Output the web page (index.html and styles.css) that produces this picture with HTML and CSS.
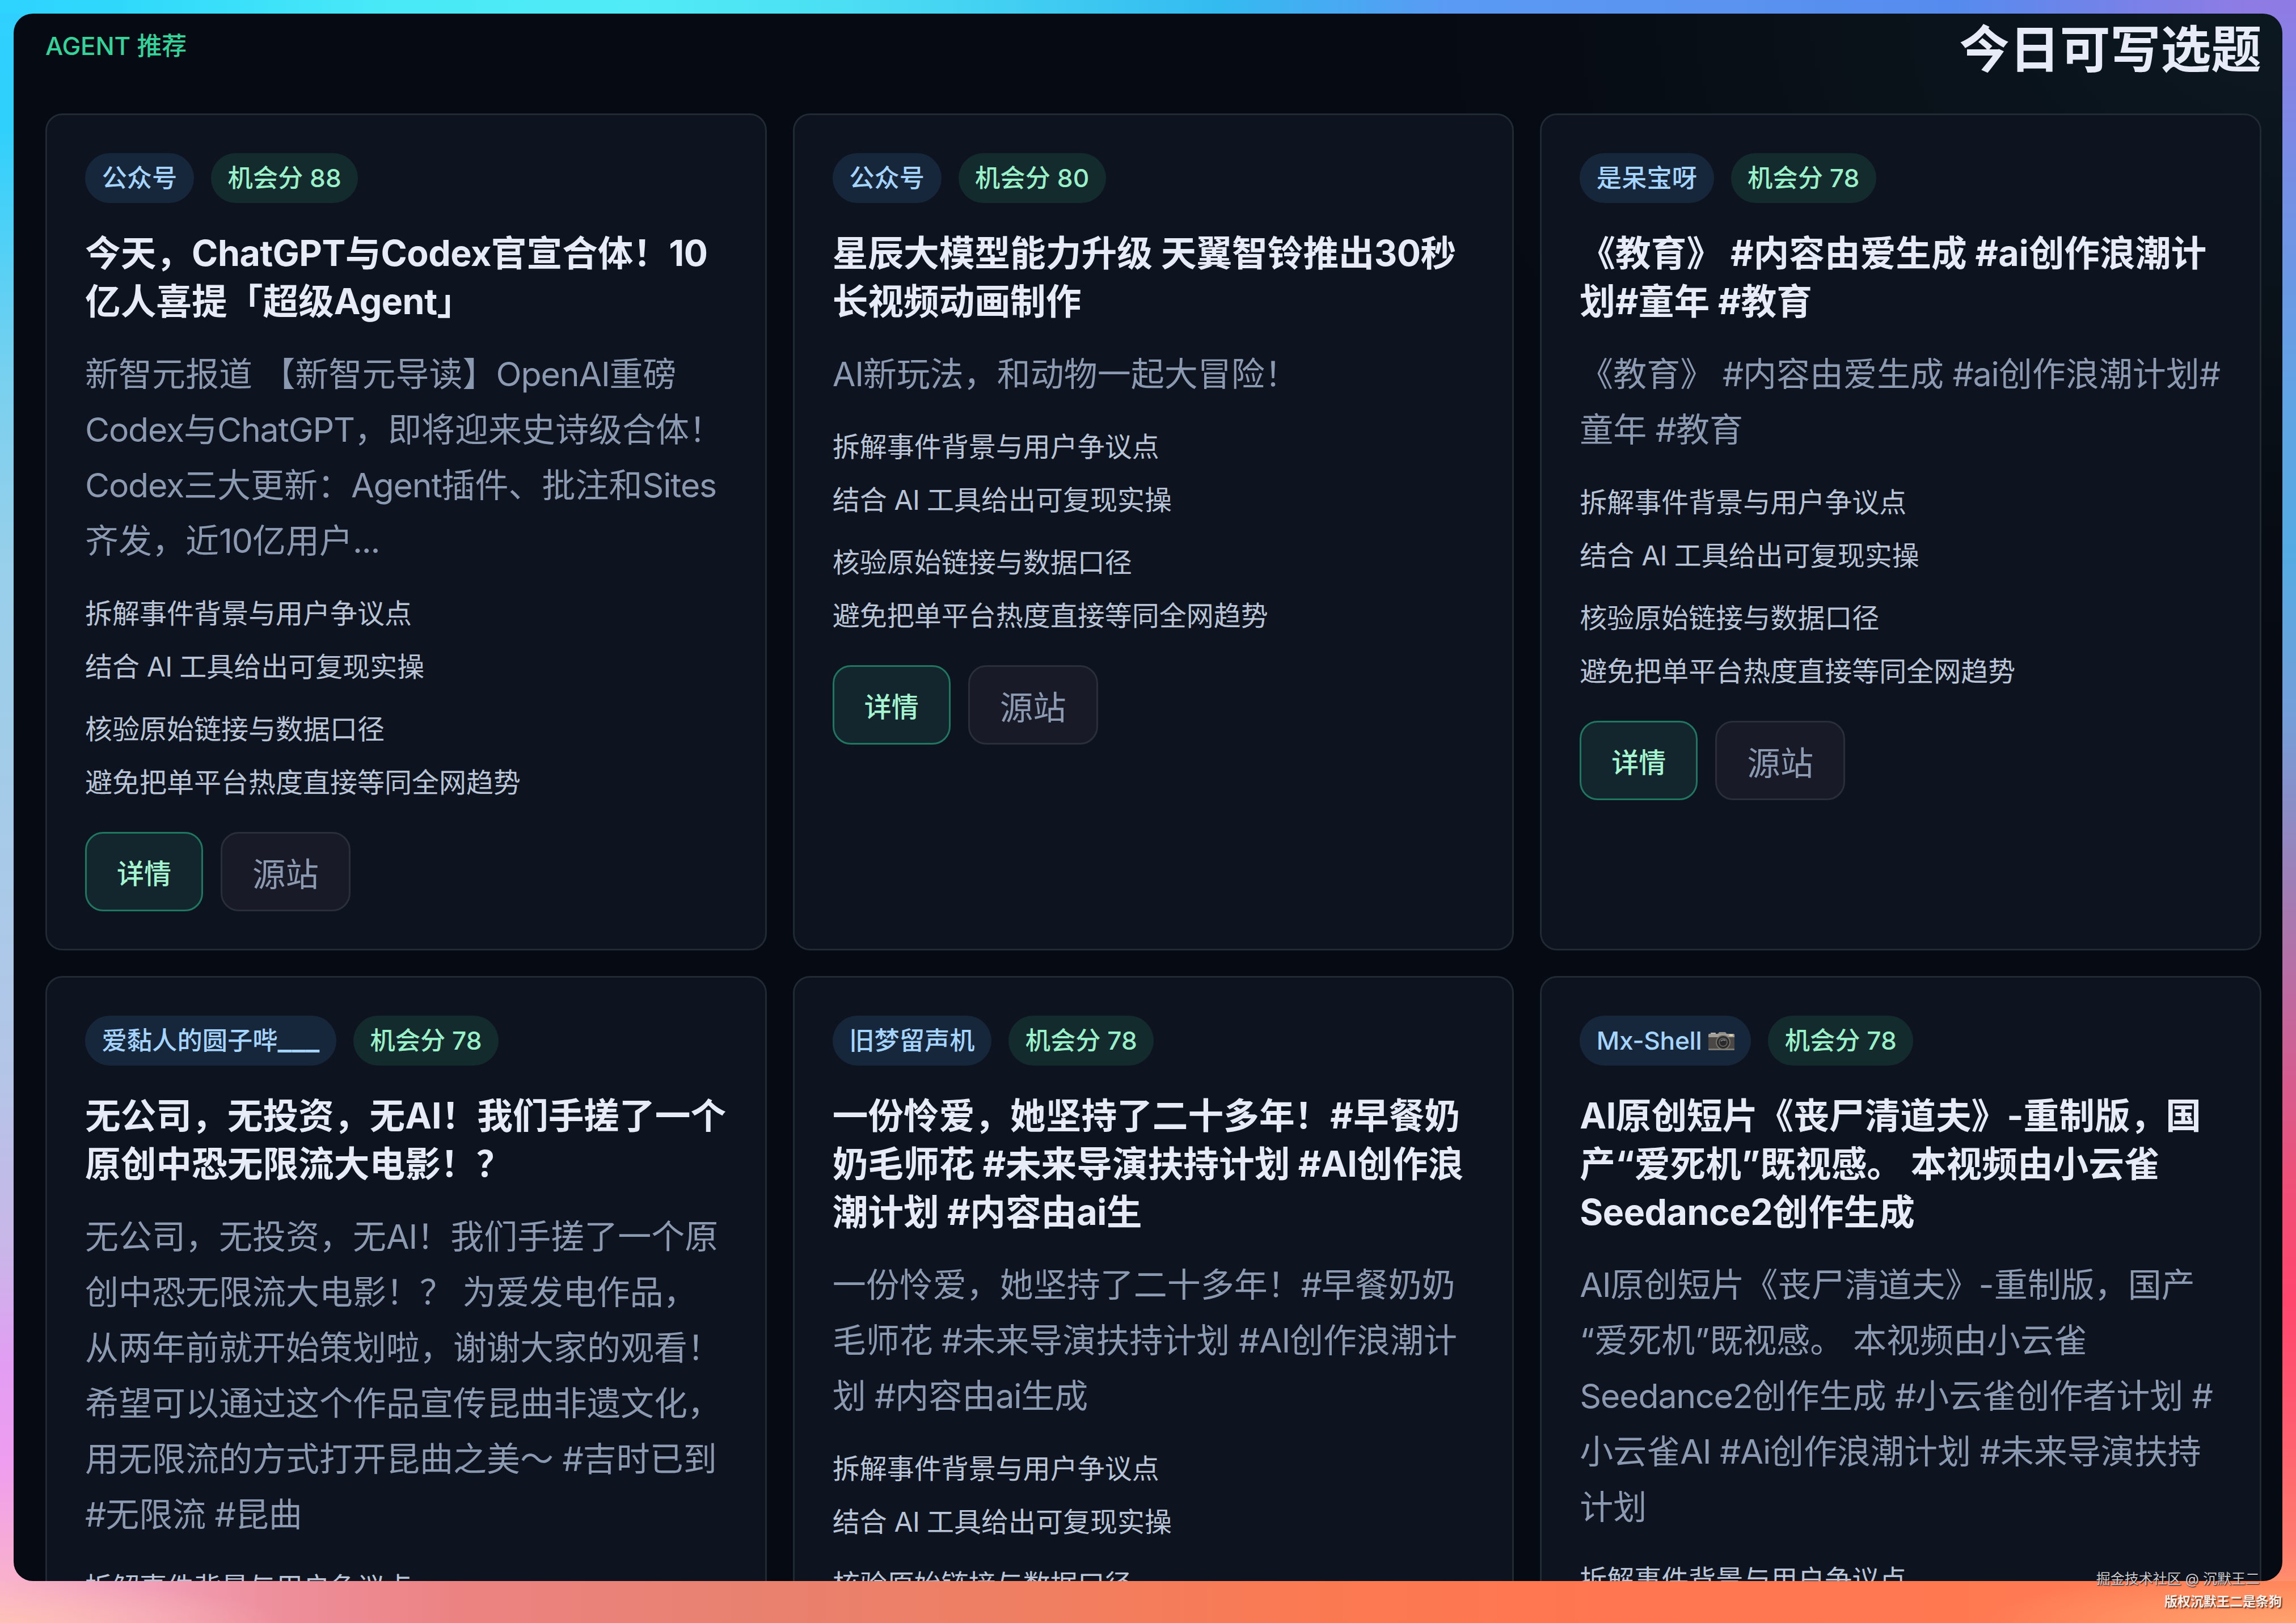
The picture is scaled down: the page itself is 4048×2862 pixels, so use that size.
FILE: index.html
```html
<!DOCTYPE html>
<html lang="zh-CN">
<head>
<meta charset="utf-8">
<title>今日可写选题</title>
<link rel="stylesheet" href="styles.css">
</head>
<body>
<main class="panel">
  <header class="head">
    <span class="eyebrow">AGENT 推荐</span>
    <h1 class="heading">今日可写选题</h1>
  </header>
  <section class="grid">
    <article class="card">
      <div class="chips"><span class="chip source">公众号</span><span class="chip score">机会分 88</span></div>
      <h2 class="title">今天，<span class="lat">ChatGPT</span>与<span class="lat">Codex</span>官宣合体！<span class="lat">10</span><br>亿人喜提「超级<span class="lat">Agent</span>」</h2>
      <p class="desc">新智元报道 【新智元导读】<span class="lat">OpenAI</span>重磅<br><span class="lat">Codex</span>与<span class="lat">ChatGPT</span>，即将迎来史诗级合体！<br><span class="lat">Codex</span>三大更新：<span class="lat">Agent</span>插件、批注和<span class="lat">Sites</span><br>齐发，近<span class="lat">10</span>亿用户<span class="lat">...</span></p>
      <ul class="list"><li>拆解事件背景与用户争议点</li><li>结合<span class="lat"> AI </span>工具给出可复现实操</li></ul>
      <ul class="list"><li>核验原始链接与数据口径</li><li>避免把单平台热度直接等同全网趋势</li></ul>
      <div class="actions"><button class="btn primary">详情</button><button class="btn">源站</button></div>
    </article>
    <article class="card">
      <div class="chips"><span class="chip source">公众号</span><span class="chip score">机会分 80</span></div>
      <h2 class="title">星辰大模型能力升级 天翼智铃推出<span class="lat">30</span>秒<br>长视频动画制作</h2>
      <p class="desc"><span class="lat">AI</span>新玩法，和动物一起大冒险！</p>
      <ul class="list"><li>拆解事件背景与用户争议点</li><li>结合<span class="lat"> AI </span>工具给出可复现实操</li></ul>
      <ul class="list"><li>核验原始链接与数据口径</li><li>避免把单平台热度直接等同全网趋势</li></ul>
      <div class="actions"><button class="btn primary">详情</button><button class="btn">源站</button></div>
    </article>
    <article class="card">
      <div class="chips"><span class="chip source">是呆宝呀</span><span class="chip score">机会分 78</span></div>
      <h2 class="title">《教育》 #内容由爱生成 #ai创作浪潮计<br>划#童年 #教育</h2>
      <p class="desc">《教育》<span class="lat"> #</span>内容由爱生成<span class="lat"> #ai</span>创作浪潮计划#<br>童年<span class="lat"> #</span>教育</p>
      <ul class="list"><li>拆解事件背景与用户争议点</li><li>结合<span class="lat"> AI </span>工具给出可复现实操</li></ul>
      <ul class="list"><li>核验原始链接与数据口径</li><li>避免把单平台热度直接等同全网趋势</li></ul>
      <div class="actions"><button class="btn primary">详情</button><button class="btn">源站</button></div>
    </article>
    <article class="card">
      <div class="chips"><span class="chip source">爱黏人的圆子哔<span class="rule">___</span></span><span class="chip score">机会分 78</span></div>
      <h2 class="title">无公司，无投资，无AI！我们手搓了一个<br>原创中恐无限流大电影！？</h2>
      <p class="desc">无公司，无投资，无<span class="lat">AI</span>！我们手搓了一个原<br>创中恐无限流大电影！？ 为爱发电作品，<br>从两年前就开始策划啦，谢谢大家的观看！<br>希望可以通过这个作品宣传昆曲非遗文化，<br>用无限流的方式打开昆曲之美～<span class="lat"> #</span>吉时已到<br><span class="lat">#</span>无限流<span class="lat"> #</span>昆曲</p>
      <ul class="list"><li>拆解事件背景与用户争议点</li></ul>
    </article>
    <article class="card">
      <div class="chips"><span class="chip source">旧梦留声机</span><span class="chip score">机会分 78</span></div>
      <h2 class="title">一份怜爱，她坚持了二十多年！#早餐奶<br>奶毛师花<span class="lat"> #</span>未来导演扶持计划<span class="lat"> #AI</span>创作浪<br>潮计划<span class="lat"> #</span>内容由<span class="lat">ai</span>生</h2>
      <p class="desc">一份怜爱，她坚持了二十多年！<span class="lat">#</span>早餐奶奶<br>毛师花<span class="lat"> #</span>未来导演扶持计划<span class="lat"> #AI</span>创作浪潮计<br>划<span class="lat"> #</span>内容由<span class="lat">ai</span>生成</p>
      <ul class="list"><li>拆解事件背景与用户争议点</li><li>结合<span class="lat"> AI </span>工具给出可复现实操</li></ul>
      <ul class="list"><li>核验原始链接与数据口径</li></ul>
    </article>
    <article class="card">
      <div class="chips"><span class="chip source"><span class="lat">Mx-Shell </span><svg class="camera" viewBox="0 0 46 32"><rect x="4" y="1" width="9" height="4" rx="1" fill="#b9b6ae"/><path d="M16 4l3-4h11l3 4z" fill="#8f8c86"/><rect x="0" y="3" width="46" height="29" rx="2" fill="#4a4744"/><path d="M2 3h42a2 2 0 0 1 2 2v4H0V5a2 2 0 0 1 2-2z" fill="#a19e97"/><rect x="0" y="29" width="46" height="3" rx="1" fill="#7d7a74"/><rect x="37" y="4" width="6" height="3" fill="#e2d9a8"/><circle cx="26" cy="18" r="13" fill="#76746f"/><circle cx="26" cy="18" r="11" fill="#2a2a2b"/><circle cx="26" cy="18" r="8" fill="#5d5d5e"/><circle cx="26" cy="18" r="6" fill="#29292c"/><path d="M22 16q4-4 8-1" stroke="#9b9ca0" stroke-width="1.5" fill="none"/></svg></span><span class="chip score">机会分 78</span></div>
      <h2 class="title"><span class="lat">AI</span>原创短片《丧尸清道夫》-重制版，国<br>产“爱死机”既视感。 本视频由小云雀<br><span class="lat">Seedance2</span>创作生成</h2>
      <p class="desc"><span class="lat">AI</span>原创短片《丧尸清道夫》-重制版，国产<br>“爱死机”既视感。 本视频由小云雀<br><span class="lat">Seedance2</span>创作生成<span class="lat"> #</span>小云雀创作者计划<span class="lat"> #</span><br>小云雀<span class="lat">AI #Ai</span>创作浪潮计划<span class="lat"> #</span>未来导演扶持<br>计划</p>
      <ul class="list"><li>拆解事件背景与用户争议点</li></ul>
    </article>
  </section>
</main>
<div class="mark community">掘金技术社区 @ 沉默王二</div>
<div class="mark owner">版权沉默王二是条狗</div>
</body>
</html>
```
FILE: styles.css
```css
* { box-sizing: border-box; margin: 0; padding: 0; }

body {
  position: relative;
  width: 4048px;
  height: 2862px;
  padding: 24px 24px 74px;
  overflow: hidden;
  font-family: Inter, "Noto Sans CJK SC", sans-serif;
  color: #e6ebf7;
  background:
    linear-gradient(90deg, #2fd3ff 0, #2fd8fb 5%, #49e9f7 17%, #50ebf6 28%, #4bdcf3 38%, #33bbf0 53%, #5a9af4 63%, #5a93f0 75%, #558bee 85%, #8f7be4 98%, #8f7be4 100%) 0 0 / 100% 24px no-repeat,
    radial-gradient(ellipse 500px 74px at 0 100%, rgba(255, 196, 178, .8), rgba(255, 196, 178, 0)) 0 100% / 500px 74px no-repeat,
    radial-gradient(ellipse 560px 90px at 100% 100%, #ffa36e, rgba(255, 160, 108, 0)) 100% 100% / 560px 90px no-repeat,
    linear-gradient(90deg, #f9b4cb 0, #f2a1ba 6%, #ee8f9c 12%, #ec8382 20%, #e9816f 33%, #f07f62 45%, #fb7951 58%, #ff7650 70%, #ff7850 85%, #ff8058 100%) 0 100% / 100% 74px no-repeat,
    linear-gradient(180deg, #2fd0ff 0, #30d0fc 8%, #77d0ef 23%, #98cfea 35%, #a5cbe8 50%, #b3c5e7 66%, #c9b6e8 77%, #e29df3 84%, #ee9df0 90%, #f8b0ce 97%, #fbb9c0 100%) 0 0 / 64px 100% no-repeat,
    linear-gradient(180deg, #8f7be4 0, #7390e4 12%, #61a3e4 24%, #54abe3 34%, #749fd9 44%, #a07db4 55%, #cf6094 65%, #ef4f77 73%, #ff466d 80%, #ff5970 87%, #ff7b6e 95%, #ff9f6c 100%) 100% 0 / 64px 100% no-repeat;
}

.panel {
  height: 2764px;
  padding: 0 37px 0 56px;
  overflow: hidden;
  border-radius: 34px;
  background: radial-gradient(ellipse 1500px 1100px at 100% 0, #0c1820 0, #0a131b 35%, #060a12 100%) #060a12;
}

.head {
  display: flex;
  justify-content: space-between;
  height: 176px;
}

.eyebrow {
  padding-top: 24px;
  font-size: 44px;
  line-height: 66px;
  letter-spacing: -.2px;
  font-weight: 500;
  color: #34d399;
}

.heading {
  font-size: 88.8px;
  line-height: 125px;
  font-weight: 700;
}

.grid {
  display: grid;
  grid-template-columns: repeat(3, minmax(0, 1fr));
  grid-template-rows: 1476px 1476px;
  gap: 45px 46px;
}

.card {
  padding: 67px;
  border: 3px solid #212933;
  border-radius: 30px;
  background: #0d141f;
  white-space: nowrap;
}

.chips { display: flex; gap: 30px; }

.chip {
  height: 88px;
  padding: 0 29.5px;
  border-radius: 44px;
  font-size: 44.3px;
  line-height: 88px;
  font-weight: 500;
}

.source { background: #17273b; color: #a5d4ff; }
.score { background: #142b2e; color: #9af0c8; }

/* Latin runs are set slightly tighter than the Chinese text around them */
.lat { letter-spacing: -.008em; }
.desc .lat { letter-spacing: -.02em; }
.list .lat { letter-spacing: -.014em; }

.rule { font-size: 1.2em; line-height: 1; }

.camera { width: 46px; height: 32px; vertical-align: -1px; }

.title {
  margin-top: 46px;
  font-size: 62.7px;
  line-height: 85px;
  font-weight: 700;
}

.desc {
  margin-top: 37px;
  font-size: 59px;
  line-height: 98px;
  color: #8b99b1;
}

.list {
  display: grid;
  gap: 12px;
  margin-top: 28px;
  list-style: none;
  font-size: 48px;
  line-height: 82px;
  color: #b9c4d6;
}

.desc + .list { margin-top: 38px; }

.actions { display: flex; gap: 31px; margin-top: 46px; }

.btn {
  height: 140px;
  padding: 0 53px;
  border: 3px solid #292e3a;
  border-radius: 32px;
  background: #181b27;
  color: #8b99b1;
  font-family: inherit;
  font-size: 58.5px;
}

.primary {
  border-color: #20775f;
  background: #13262d;
  color: #a5f5d0;
  font-size: 48px;
  font-weight: 500;
}

.mark { position: absolute; line-height: 36px; white-space: nowrap; }

.community {
  right: 64px;
  top: 2766px;
  font-size: 25px;
  color: #c9cbd0;
  text-shadow: 1px 1px 2px #000;
}

.owner {
  right: 25px;
  top: 2806px;
  font-size: 23px;
  font-weight: 700;
  color: #fdeee6;
  text-shadow: 2px 2px 2px #5b2c1c;
}
```
